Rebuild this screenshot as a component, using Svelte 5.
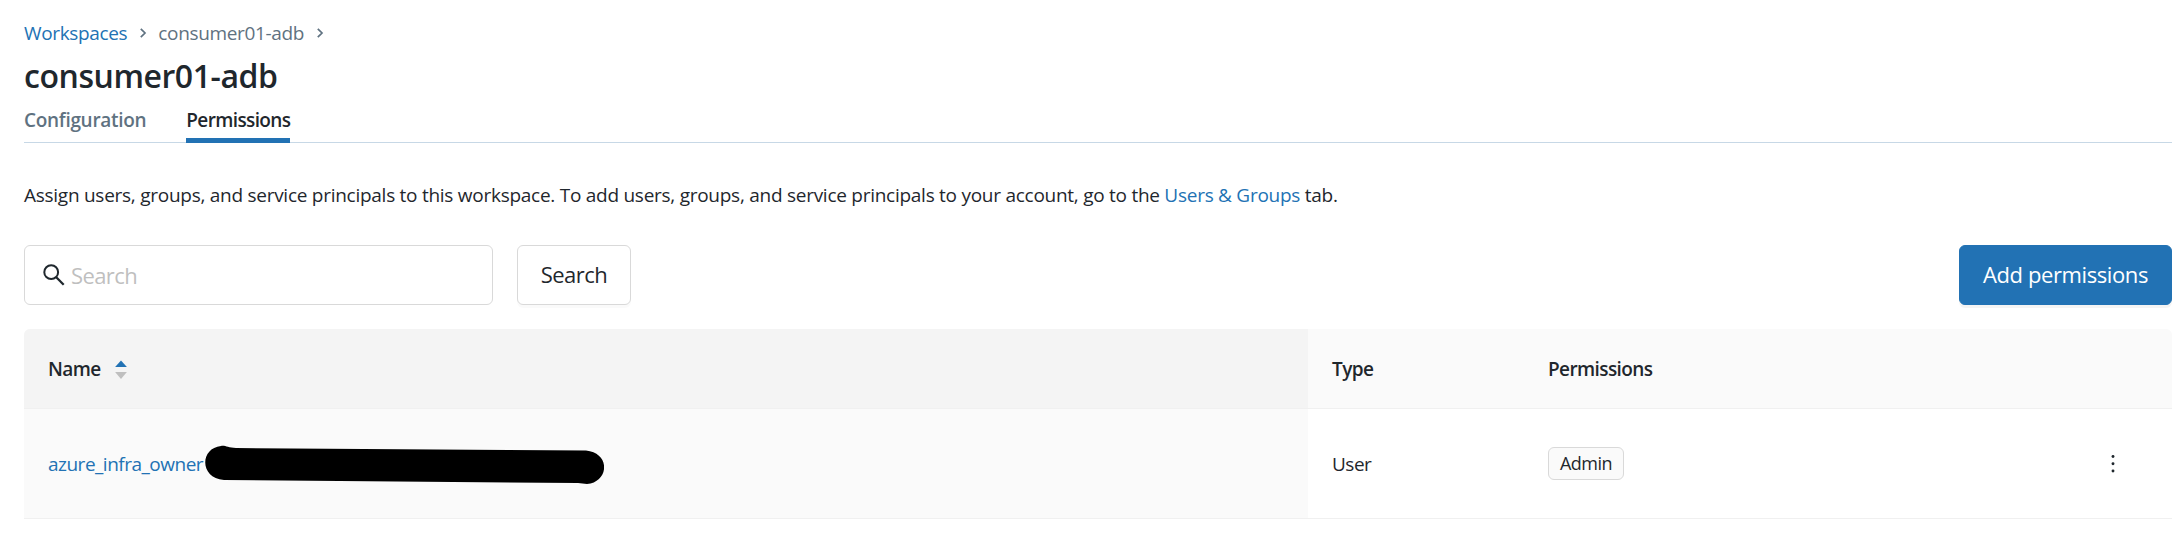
<script>
  const crumbs = [{ label: 'Workspaces', link: true }, { label: 'consumer01-adb', link: false }];
  const tabs = ['Configuration', 'Permissions'];
  let active = $state('Permissions');
  let query = $state('');
  const rows = [{ name: 'azure_infra_owner', type: 'User', permission: 'Admin' }];
</script>

<main>
  <nav class="crumbs">
    {#each crumbs as crumb}
      <span class="crumb" class:link={crumb.link}>{crumb.label}</span>
      <svg class="chevron" width="8" height="12" viewBox="0 0 8 12"><path d="M1.8 1.8 6 6 1.8 10.2" fill="none" stroke="#5f7281" stroke-width="1.7" /></svg>
    {/each}
  </nav>
  <h1>consumer01-adb</h1>
  <div class="tabs">
    {#each tabs as tab}
      <button class="tab" class:active={tab === active} onclick={() => (active = tab)}><span>{tab}</span></button>
    {/each}
  </div>

  <p class="description">Assign users, groups, and service principals to this workspace. To add users, groups, and service principals to your account, go to the <span class="link">Users &amp; Groups</span> tab.</p>

  <div class="toolbar">
    <label class="search">
      <svg width="22" height="22" viewBox="0 0 22 22"><circle cx="8.2" cy="8.2" r="6.9" fill="none" stroke="#1f272d" stroke-width="2" /><path d="M13 13l7.7 7.700" stroke="#1f272d" stroke-width="2.3" /></svg>
      <input placeholder="Search" bind:value={query} />
    </label>
    <button class="btn">Search</button>
    <button class="btn primary">Add permissions</button>
  </div>

  <div class="table">
    <div class="row head">
      <div class="cell name"><span>Name</span>
        <svg class="sort" width="12" height="20" viewBox="0 0 12 20"><path d="M6 .4 11.9 7H.1z" fill="#2272b4" /><path d="M.1 12h11.800L6 19z" fill="#bfbfbf" /></svg>
      </div>
      <div class="cell">Type</div>
      <div class="cell">Permissions</div>
      <div class="cell"></div>
    </div>
    {#each rows as row}
      <div class="row body">
        <div class="cell name">
          <span class="link">{row.name}</span>
          <svg class="redaction" width="400" height="50" viewBox="0 0 400 50"><path d="M17 1C21 0 24 3 32 3L382 5.500C407 8 405 37 383 39L374 38 20 35C-5 33-4 3 17 1Z" /></svg>
        </div>
        <div class="cell">{row.type}</div>
        <div class="cell"><span class="tag">{row.permission}</span></div>
        <div class="cell actions">
          <svg width="4" height="20" viewBox="0 0 4 20"><g fill="#1f272d"><circle cx="2" cy="2.500" r="1.450" /><circle cx="2" cy="9.800" r="1.450" /><circle cx="2" cy="17" r="1.450" /></g></svg>
        </div>
      </div>
    {/each}
  </div>
</main>

<style>
  :global(body) { background: #fff; }
  main { box-sizing: border-box; height: 547px; padding: 19px 10px 0 24px; font-family: "Open Sans", "Noto Sans", sans-serif; font-size: 19px; color: #1f272d; white-space: nowrap; overflow: hidden; }
  button, input { font: inherit; color: inherit; }
  .link { color: #2272b4; }
  .crumbs { display: flex; align-items: center; height: 28px; color: #5f7281; letter-spacing: -.35px; }
  .chevron { margin: 0 11px 0 12px; }
  h1 { margin: 8px 0 0; height: 42px; font-size: 32px; line-height: 41px; font-weight: 600; letter-spacing: -.45px; }
  .tabs { display: flex; gap: 40px; height: 45px; border-bottom: 1px solid #c7d8e6; }
  .tab { padding: 5px 0 0; margin-bottom: -1px; border: 0; border-bottom: 5px solid transparent; background: none; color: #5f7281; font-weight: 600; letter-spacing: -.3px; }
  .tab.active { color: #1f272d; border-color: #2272b4; letter-spacing: -.63px; }
  .description { margin: 38px 0 0; line-height: 28px; letter-spacing: -.265px; }
  .toolbar { display: flex; gap: 24px; height: 60px; margin-top: 36px; }
  .search { box-sizing: border-box; width: 469px; display: flex; align-items: center; gap: 6px; padding-left: 18px; border: 1px solid #d9d9d9; border-radius: 6px; }
  input { border: 0; outline: 0; padding: 0 0 1px; flex: 1; font-size: 22px; letter-spacing: -.6px; background: none; }
  input::placeholder { color: #bfbfbf; opacity: 1; }
  .btn { box-sizing: border-box; width: 114px; padding: 0 0 2px; border: 1px solid #d9d9d9; border-radius: 6px; background: #fff; box-shadow: 0 3px 0 rgb(0 0 0 / 2%); font-size: 22px; letter-spacing: -.5px; }
  .primary { width: 213px; margin-left: auto; background: #2272b4; border-color: #2272b4; color: #fff; box-shadow: 0 3px 0 rgb(0 0 0 / 4.5%); letter-spacing: -.4px; }
  .table { margin-top: 24px; border-radius: 6px 6px 0 0; overflow: hidden; }
  .row { display: grid; grid-template-columns: 1284px 216px 530px 1fr; border-bottom: 1px solid #f0f0f0; }
  .head { height: 79px; background: #fafafa; font-weight: 600; letter-spacing: -.6px; }
  .head .name { background: #f4f4f4; }
  .body { height: 109px; letter-spacing: -.5px; }
  .body .name { background: #fafafa; }
  .cell { display: flex; align-items: center; padding-left: 24px; }
  .sort { margin: 2px 0 0 14px; }
  .name { position: relative; }
  .redaction { position: absolute; left: 180px; top: 36px; }
  .tag { box-sizing: border-box; display: grid; place-items: center; width: 76px; height: 33px; padding-bottom: 1px; border: 1px solid #d9d9d9; border-radius: 6px; background: #fafafa; font-size: 18px; }
  .actions { padding-left: 57px; }
</style>
